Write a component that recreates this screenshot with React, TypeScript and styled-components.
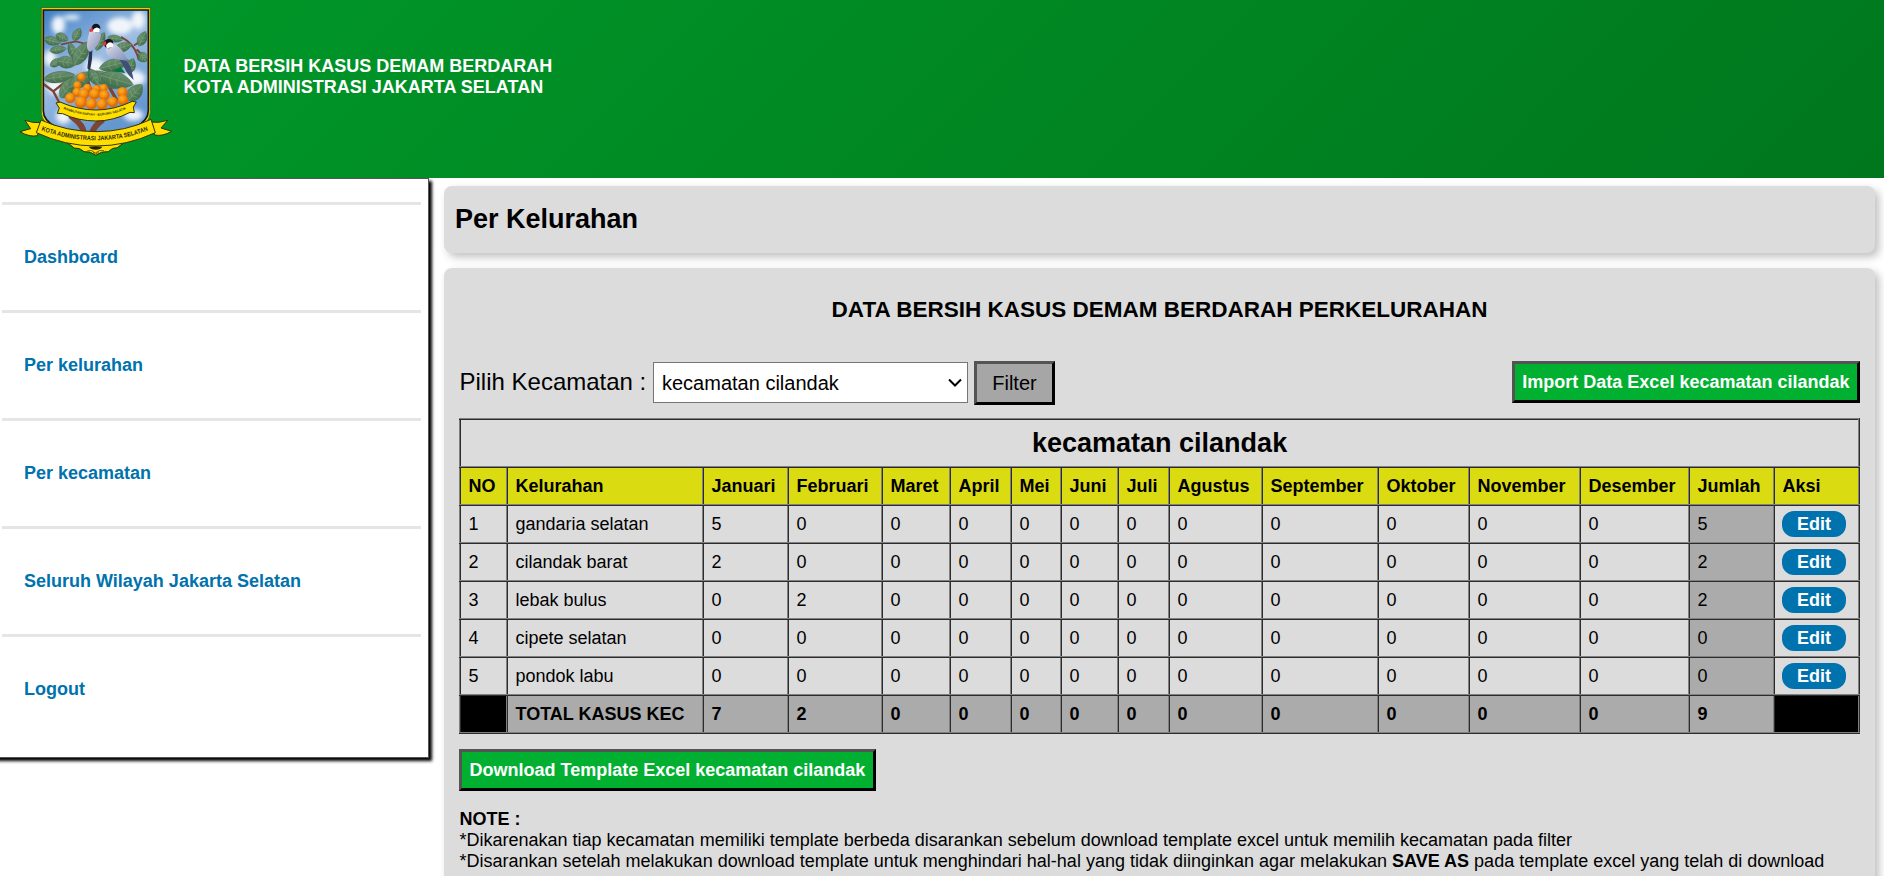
import React from "react";
import styled, { createGlobalStyle } from "styled-components";

const GlobalStyle = createGlobalStyle`
  * { box-sizing: border-box; }
  body {
    margin: 0;
    background: #fff;
    color: #000;
    font-family: Arial, "Liberation Sans", sans-serif;
    font-size: 18px;
  }
`;

const Page = styled.div`
  height: 100vh;
  overflow: hidden;
  display: flex;
  flex-direction: column;
`;

const Header = styled.header`
  flex: none;
  height: 178px;
  padding: 5px 0 0 18px;
  display: flex;
  align-items: flex-start;
  gap: 9.5px;
  background: linear-gradient(135deg, #009929, #00771d);
`;

const HeaderTitle = styled.div`
  padding-top: 51px;
  color: #fff;
  font-weight: bold;
  line-height: 21px;
`;

const Body = styled.div`
  flex: 1;
  min-height: 0;
  display: flex;
  align-items: flex-start;
`;

const Sidebar = styled.nav`
  flex: none;
  width: 437px;
  height: 580px;
  margin-left: -8px;
  padding: 23px 7px 0 10px;
  border: solid #555;
  border-width: 1px 1px 1px 0;
  box-shadow: 3px 3px 3px #000;
`;

const MenuLink = styled.a`
  display: flex;
  align-items: center;
  height: 108px;
  padding-left: 22px;
  border-top: 3px solid #e5e5e5;
  color: #0072ad;
  font-weight: bold;
  text-decoration: none;
`;

const Main = styled.main`
  flex: 1;
  min-width: 0;
  padding: 8px 9px 0 15px;
  display: flex;
  flex-direction: column;
  gap: 15px;
`;

const Panel = styled.section`
  background: #dcdcdc;
  border-radius: 8px;
  box-shadow: 4px 4px 8px rgba(0, 0, 0, 0.25);
`;

const TitlePanel = styled(Panel)`
  height: 67px;
  padding: 18px 11px 0;
`;

const ContentPanel = styled(Panel)`
  height: 640px;
  padding: 29px 15px 0;
`;

const PageTitle = styled.h2`
  margin: 0;
  font-size: 27px;
  line-height: 31px;
`;

const ReportTitle = styled.h3`
  margin: 0 0 38px;
  text-align: center;
  font-size: 22.5px;
  line-height: 26px;
`;

const Toolbar = styled.div`
  display: flex;
  justify-content: space-between;
  align-items: flex-start;
  height: 57px;
`;

const FilterForm = styled.form`
  display: flex;
  align-items: flex-start;
`;

const FilterLabel = styled.label`
  width: 194px;
  padding: 7px 0 0 0.5px;
  font-size: 24px;
  line-height: 28px;
`;

const SelectBox = styled.div`
  display: grid;
  align-items: center;
  width: 315px;
  height: 41px;
  margin: 1px 6px 0 0;
`;

const Select = styled.select`
  grid-area: 1 / 1;
  width: 100%;
  height: 100%;
  padding: 1px 24px 0 8px;
  border: 1px solid #767676;
  border-radius: 0;
  appearance: none;
  background-color: #fff;
  color: #000;
  font: 20px Arial, "Liberation Sans", sans-serif;
`;

const Chevron = styled.svg`
  grid-area: 1 / 1;
  justify-self: end;
  margin-right: 6px;
  pointer-events: none;
`;

const FilterButton = styled.button`
  width: 81px;
  height: 44px;
  padding: 0;
  border: 3px outset #000;
  background: #a6a6a6;
  color: #000;
  font: 20px Arial, "Liberation Sans", sans-serif;
`;

const ExcelButton = styled.button`
  height: 42px;
  padding: 0 7.5px;
  border: 3px outset #000;
  background: #02b031;
  color: #fff;
  font: bold 18px Arial, "Liberation Sans", sans-serif;
  white-space: nowrap;
`;

const Table = styled.table`
  width: 1401px;
  margin-bottom: 15px;
  table-layout: fixed;
  border-collapse: collapse;
`;

const Column = styled.col<{ $width: number }>`
  width: ${(p) => p.$width}px;
`;

const Row = styled.tr`
  height: 38px;
`;

type Tone = "plain" | "head" | "sum" | "blank";

const toneColor: Record<Tone, string> = {
  plain: "transparent",
  head: "#dbdb12",
  sum: "#ababab",
  blank: "#000",
};

const Cell = styled.td<{ $tone?: Tone; $bold?: boolean }>`
  padding: 0 0 0 7.5px;
  border: 2px ridge gray;
  background: ${(p) => toneColor[p.$tone ?? "plain"]};
  font-weight: ${(p) => (p.$bold ? "bold" : "normal")};
  text-align: left;
  white-space: nowrap;
`;

const ActionCell = styled(Cell)`
  padding-left: 7px;
`;

const DistrictCell = styled.th`
  height: 48px;
  padding: 0;
  border: 2px ridge gray;
  font-size: 27px;
`;

const EditLink = styled.a`
  display: block;
  width: 64px;
  height: 26px;
  border-radius: 12px;
  background: #0072ad;
  color: #fff;
  font-weight: bold;
  line-height: 26px;
  text-align: center;
`;

const Notes = styled.div`
  margin-top: 18px;
  padding-left: 0.5px;
  line-height: 21px;
`;

const LogoSvg = styled.svg`
  flex: none;
  display: block;
`;

const leaves: [number, number, number, number, number][] = [
  [157, 123, 26, 12, 14],
  [174, 149, 25, 11, -8],
  [186, 112, 20, 12, 25],
  [231, 103, 21, 12, -62],
  [217, 155, 28, 11, 72],
  [168, 188, 20, 11, -30],
  [200, 187, 30, 17, 8],
  [244, 160, 42, 19, -58],
  [301, 124, 30, 12, -66],
  [346, 116, 24, 10, 8],
  [370, 141, 27, 13, -18],
  [427, 116, 24, 13, -65],
  [428, 172, 17, 14, 50],
  [392, 198, 24, 14, -70],
  [178, 231, 48, 16, -8],
  [206, 262, 40, 20, -52],
  [244, 240, 44, 19, -32],
  [344, 194, 48, 17, -14],
  [318, 240, 50, 18, 30],
  [350, 240, 52, 22, 16],
  [405, 278, 32, 19, -48],
  [282, 232, 30, 14, 60],
];

const fruits: [number, number, number][] = [
  [244, 231, 13],
  [232, 256, 12],
  [262, 264, 13],
  [290, 268, 13],
  [311, 264, 12],
  [231, 277, 14],
  [211, 294, 16],
  [252, 282, 17],
  [284, 282, 17],
  [313, 286, 16],
  [367, 277, 16],
  [369, 300, 16],
  [338, 306, 16],
  [243, 307, 18],
  [274, 312, 17],
  [306, 313, 17],
];

const Leaf = ({ d }: { d: [number, number, number, number, number] }) => {
  const [x, y, rx, ry, a] = d;
  return (
    <g transform={`translate(${x} ${y}) rotate(${a})`}>
      <path
        d={`M${-rx} 0C${-rx * 0.6} ${-ry * 1.4} ${rx * 0.4} ${-ry * 1.4} ${rx} 0C${rx * 0.4} ${ry * 1.4} ${-rx * 0.6} ${ry * 1.4} ${-rx} 0Z`}
        fill="url(#leaf)"
        stroke="#345a3d"
        strokeWidth="1"
      />
      <path
        d={`M${-rx} 0H${rx}M${-rx * 0.4} 0l7 ${-ry * 0.8}M${-rx * 0.4} 0l7 ${ry * 0.8}M0 0l7 ${-ry * 0.7}M0 0l7 ${ry * 0.7}`}
        stroke="#98b58f"
        strokeWidth="1.1"
        fill="none"
      />
    </g>
  );
};

const Logo = () => (
  <LogoSvg width="156" height="152" viewBox="54 15 468 456" aria-label="Kota Administrasi Jakarta Selatan">
    <defs>
      <linearGradient id="sky" x1="0" y1="0" x2="0.5" y2="1">
        <stop offset="0" stopColor="#3f7fc4" />
        <stop offset="0.5" stopColor="#9dbde2" />
        <stop offset="1" stopColor="#6496d0" />
      </linearGradient>
      <linearGradient id="leaf" x1="0" y1="0" x2="0" y2="1">
        <stop offset="0" stopColor="#6c926d" />
        <stop offset="1" stopColor="#426f4c" />
      </linearGradient>
      <radialGradient id="fruit" cx="0.4" cy="0.35">
        <stop offset="0" stopColor="#ffae28" />
        <stop offset="0.65" stopColor="#f28c0c" />
        <stop offset="1" stopColor="#dc6c0a" />
      </radialGradient>
      <linearGradient id="plume" x1="0" y1="0" x2="1" y2="1">
        <stop offset="0" stopColor="#e0dcea" />
        <stop offset="1" stopColor="#7d8fb8" />
      </linearGradient>
      <filter id="cloud">
        <feGaussianBlur stdDeviation="8" />
      </filter>
      <clipPath id="shield">
        <path d="M132 32H443V330Q443 360 405 378Q350 402 288 402Q225 402 170 378Q132 360 132 330Z" />
      </clipPath>
      <path id="motto" d="M124 391Q205 421 288 421Q371 421 452 388" />
      <path id="innerMotto" d="M190 327Q240 347 288 347Q336 347 386 324" />
    </defs>
    <path
      d="M124 23H451V335Q451 368 410 388Q350 412 288 412Q225 412 165 388Q124 368 124 335Z"
      fill="#ffe000"
      stroke="#3a4a10"
      strokeWidth="2"
    />
    <path
      d="M130 30H445V332Q445 362 405 382Q350 405 288 405Q225 405 170 382Q130 362 130 332Z"
      fill="url(#sky)"
      stroke="#15161a"
      strokeWidth="5"
    />
    <g clipPath="url(#shield)">
      <g fill="#f1f5fb" filter="url(#cloud)">
        <ellipse cx="175" cy="75" rx="20" ry="28" />
        <ellipse cx="215" cy="52" rx="26" ry="8" />
        <ellipse cx="360" cy="78" rx="38" ry="26" />
        <ellipse cx="415" cy="60" rx="20" ry="28" />
        <ellipse cx="150" cy="175" rx="18" ry="24" />
        <ellipse cx="400" cy="235" rx="36" ry="24" />
        <ellipse cx="165" cy="255" rx="24" ry="30" />
        <ellipse cx="400" cy="345" rx="30" ry="18" />
        <ellipse cx="190" cy="350" rx="22" ry="22" />
        <ellipse cx="285" cy="200" rx="30" ry="25" />
      </g>
      <g fill="none" stroke="#7c4535" strokeLinecap="round">
        <path strokeWidth="5" d="M185 133L228 124L270 135L300 138" />
        <path strokeWidth="6" d="M365 112Q400 130 412 165L416 178M412 150L440 180M404 135L425 122" />
        <path strokeWidth="7" d="M130 252L160 274L180 312M160 274L190 250" />
        <path strokeWidth="10" d="M262 240L275 280M330 265L350 300" />
        <path strokeWidth="18" d="M215 350Q250 375 252 400M305 362Q285 375 275 400" />
      </g>
      {leaves.map((d, i) => (
        <Leaf key={i} d={d} />
      ))}
      <path d="M335 214L362 201L376 219Z" fill="#06773b" />
      <path d="M268 150L277 146L276 178L270 212L262 205Z" fill="#273552" />
      <path d="M268 95Q294 88 303 105Q300 138 270 156Q256 150 263 118Z" fill="url(#plume)" />
      <circle cx="288" cy="84" r="13" fill="#14151c" />
      <path d="M278 91Q289 76 300 87L298 96L280 97Z" fill="#fff" />
      <path d="M268 89L277 82L280 94L270 96Z" fill="#e8333c" />
      <path d="M355 172L375 175L392 200L401 240L386 225Z" fill="#3f4f76" />
      <path d="M322 140Q345 125 360 145Q378 164 382 182L348 178Q318 172 318 150Z" fill="url(#plume)" />
      <circle cx="326" cy="131" r="14" fill="#14151c" />
      <path d="M318 136Q328 120 341 132L338 142L320 145Z" fill="#fff" />
      <path d="M308 130L317 123L320 134L311 137Z" fill="#e8333c" />
      {fruits.map(([x, y, r], i) => (
        <circle key={i} cx={x} cy={y} r={r} fill="url(#fruit)" />
      ))}
    </g>
    <g fill="#ffdf00" stroke="#33330a" strokeWidth="3" strokeLinejoin="round">
      <path d="M180 306Q235 330 288 330Q342 330 397 304L409 306L400 321L403 338L390 337Q340 363 288 363Q235 363 188 341L172 340L178 324L168 309Z" />
      <path d="M190 424Q212 432 222 444Q240 442 252 455Q272 453 287 466Q304 453 325 455Q336 442 352 443Q364 431 385 424L288 415Z" />
      <path d="M75 361Q98 370 124 368L112 407Q88 412 60 395L92 386Z" />
      <path d="M503 361Q477 370 452 366L464 405Q488 410 515 394L483 384Z" />
      <path d="M123 360Q200 395 288 395Q376 395 453 358L466 398Q380 438 288 438Q195 438 109 398Z" />
    </g>
    <path d="M266 440Q287 437 307 440Q302 449 287 449Q272 449 266 440Z" fill="#222408" />
    <path d="M262 452Q276 448 286 459Q298 448 312 452M278 455L287 463L297 455" fill="none" stroke="#33330a" strokeWidth="2" />
    <text fontFamily="Arial, Liberation Sans, sans-serif" fontWeight="bold" fontSize="19" fill="#2a2a08">
      <textPath href="#motto" textLength="328" lengthAdjust="spacingAndGlyphs">KOTA ADMINISTRASI JAKARTA SELATAN</textPath>
    </text>
    <text fontFamily="Arial, Liberation Sans, sans-serif" fontWeight="bold" fontSize="10" fill="#3a3a08">
      <textPath href="#innerMotto" textLength="194" lengthAdjust="spacingAndGlyphs">RAMBUTAN RAPIAH - BURUNG GELATIK</textPath>
    </text>
  </LogoSvg>
);

const menu = ["Dashboard", "Per kelurahan", "Per kecamatan", "Seluruh Wilayah Jakarta Selatan", "Logout"];

const columns: [string, number][] = [
  ["NO", 47],
  ["Kelurahan", 196],
  ["Januari", 85],
  ["Februari", 94],
  ["Maret", 68],
  ["April", 61],
  ["Mei", 50],
  ["Juni", 57],
  ["Juli", 51],
  ["Agustus", 93],
  ["September", 116],
  ["Oktober", 91],
  ["November", 111],
  ["Desember", 109],
  ["Jumlah", 85],
  ["Aksi", 85],
];

const rows: { name: string; months: number[] }[] = [
  { name: "gandaria selatan", months: [5, 0, 0, 0, 0, 0, 0, 0, 0, 0, 0, 0] },
  { name: "cilandak barat", months: [2, 0, 0, 0, 0, 0, 0, 0, 0, 0, 0, 0] },
  { name: "lebak bulus", months: [0, 2, 0, 0, 0, 0, 0, 0, 0, 0, 0, 0] },
  { name: "cipete selatan", months: [0, 0, 0, 0, 0, 0, 0, 0, 0, 0, 0, 0] },
  { name: "pondok labu", months: [0, 0, 0, 0, 0, 0, 0, 0, 0, 0, 0, 0] },
];

const sum = (values: number[]) => values.reduce((a, b) => a + b, 0);
const totals = rows[0].months.map((_, m) => sum(rows.map((r) => r.months[m])));

export default function App() {
  return (
    <Page>
      <GlobalStyle />
      <Header>
        <Logo />
        <HeaderTitle>
          DATA BERSIH KASUS DEMAM BERDARAH
          <br />
          KOTA ADMINISTRASI JAKARTA SELATAN
        </HeaderTitle>
      </Header>
      <Body>
        <Sidebar>
          {menu.map((m) => (
            <MenuLink key={m}>{m}</MenuLink>
          ))}
        </Sidebar>
        <Main>
          <TitlePanel>
            <PageTitle>Per Kelurahan</PageTitle>
          </TitlePanel>
          <ContentPanel>
            <ReportTitle>DATA BERSIH KASUS DEMAM BERDARAH PERKELURAHAN</ReportTitle>
            <Toolbar>
              <FilterForm>
                <FilterLabel htmlFor="kecamatan">Pilih Kecamatan :</FilterLabel>
                <SelectBox>
                  <Select id="kecamatan">
                    <option>kecamatan cilandak</option>
                  </Select>
                  <Chevron width="14" height="10" viewBox="0 0 14 10">
                    <path d="M1 1.5L7 7.5L13 1.5" fill="none" stroke="#000" strokeWidth="2" />
                  </Chevron>
                </SelectBox>
                <FilterButton type="button">Filter</FilterButton>
              </FilterForm>
              <ExcelButton>Import Data Excel kecamatan cilandak</ExcelButton>
            </Toolbar>
            <Table>
              <colgroup>
                {columns.map(([label, width]) => (
                  <Column key={label} $width={width} />
                ))}
              </colgroup>
              <tbody>
                <tr>
                  <DistrictCell colSpan={16}>kecamatan cilandak</DistrictCell>
                </tr>
                <Row>
                  {columns.map(([label]) => (
                    <Cell as="th" key={label} $tone="head" $bold>
                      {label}
                    </Cell>
                  ))}
                </Row>
                {rows.map((row, i) => (
                  <Row key={row.name}>
                    <Cell>{i + 1}</Cell>
                    <Cell>{row.name}</Cell>
                    {row.months.map((n, m) => (
                      <Cell key={m}>{n}</Cell>
                    ))}
                    <Cell $tone="sum">{sum(row.months)}</Cell>
                    <ActionCell>
                      <EditLink>Edit</EditLink>
                    </ActionCell>
                  </Row>
                ))}
                <Row>
                  <Cell $tone="blank" />
                  <Cell $tone="sum" $bold>
                    TOTAL KASUS KEC
                  </Cell>
                  {totals.map((n, m) => (
                    <Cell key={m} $tone="sum" $bold>
                      {n}
                    </Cell>
                  ))}
                  <Cell $tone="sum" $bold>
                    {sum(totals)}
                  </Cell>
                  <Cell $tone="blank" />
                </Row>
              </tbody>
            </Table>
            <ExcelButton>Download Template Excel kecamatan cilandak</ExcelButton>
            <Notes>
              <b>NOTE :</b>
              <br />
              *Dikarenakan tiap kecamatan memiliki template berbeda disarankan sebelum download template excel untuk
              memilih kecamatan pada filter
              <br />
              *Disarankan setelah melakukan download template untuk menghindari hal-hal yang tidak diinginkan agar
              melakukan <b>SAVE AS</b> pada template excel yang telah di download
            </Notes>
          </ContentPanel>
        </Main>
      </Body>
    </Page>
  );
}
